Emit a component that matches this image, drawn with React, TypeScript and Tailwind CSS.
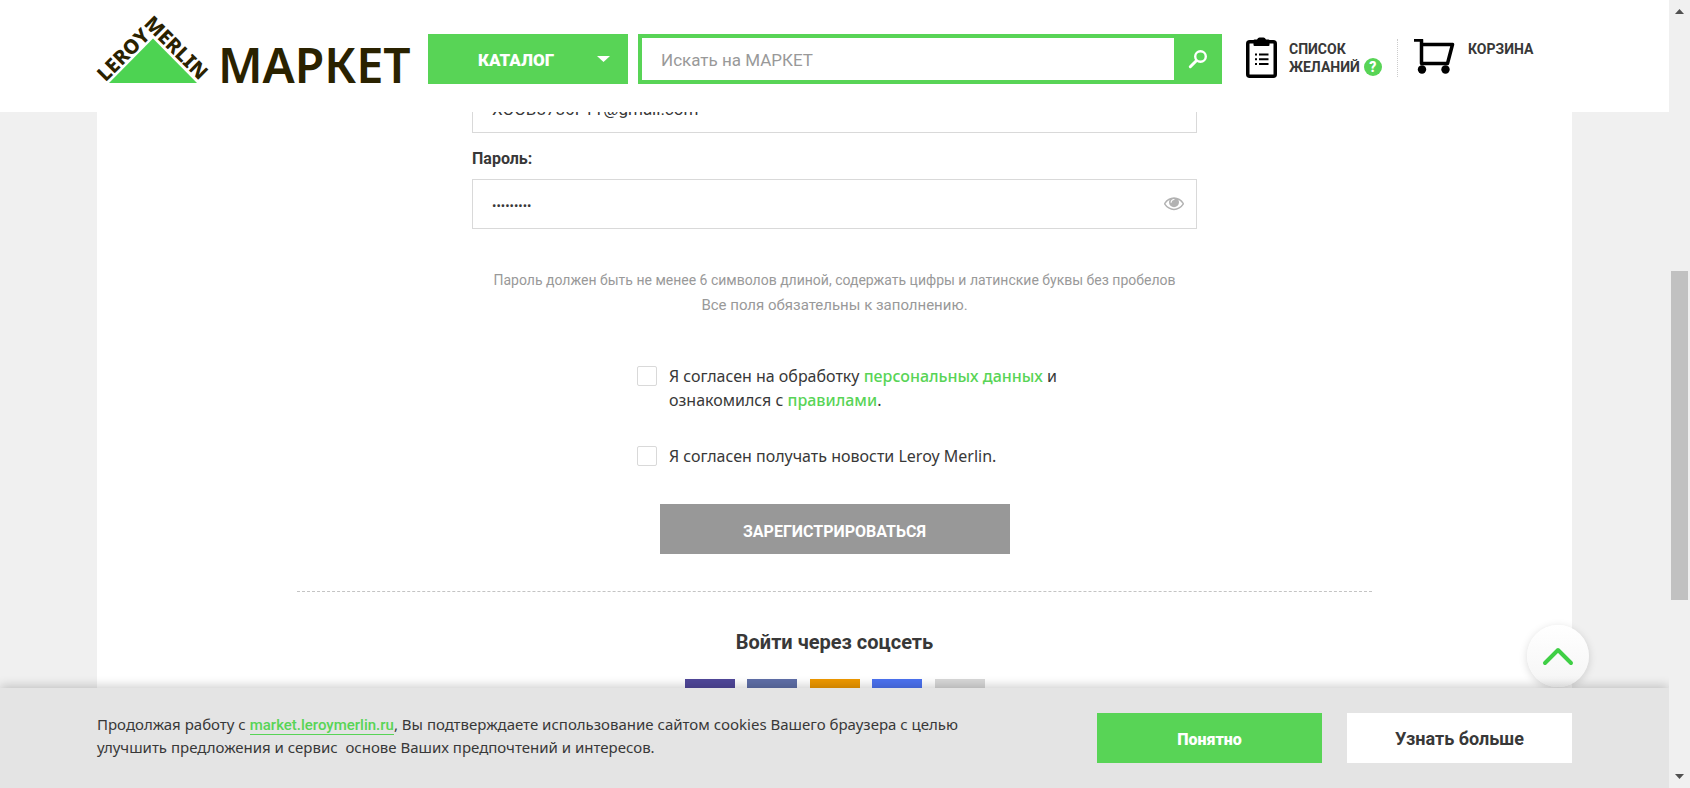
import React from "react";

const socials = [
  { name: "Viber", color: "bg-[#50479a]" },
  { name: "ВКонтакте", color: "bg-[#5f6fa8]" },
  { name: "Одноклассники", color: "bg-[#ee9800]" },
  { name: "Facebook", color: "bg-[#4b72f0]" },
  { name: "Почта", color: "bg-[#d8d8d8]" },
];

function Logo() {
  return (
    <svg width="313" height="76" viewBox="0 0 313 76" className="overflow-visible" role="img" aria-label="Leroy Merlin Маркет">
      <polygon points="12,71 56,26.500 100,71" fill="#4dd352" />
      <g fill="#2a2200" fontFamily="'Noto Sans', sans-serif">
        <g fontWeight="800">
          <text fontSize="20" transform="translate(8.500 70.500) rotate(-45)">LEROY</text>
          <text fontSize="20" transform="translate(46 12.500) rotate(45)">MERLIN</text>
        </g>
        <text x="121" y="71" fontSize="48" fontWeight="600">МАРКЕТ</text>
      </g>
    </svg>
  );
}

function SearchIcon() {
  return (
    <svg width="20" height="20" viewBox="0 0 20 20" fill="none" stroke="#fff">
      <circle cx="12.500" cy="7.500" r="5.300" strokeWidth="2.400" />
      <path d="M8.300 11.700 2.300 17.700" strokeWidth="3" strokeLinecap="round" />
    </svg>
  );
}

function ClipboardIcon() {
  return (
    <svg width="31" height="41" viewBox="0 0 31 41" className="shrink-0">
      <rect x="1.750" y="4.750" width="27.500" height="34.500" rx="2" fill="none" stroke="#000" strokeWidth="3.500" />
      <path d="M7.500 3.500q0-1 1-1h2.500q1-2 2.500-2h4q1.500 0 2.500 2h2.500q1 0 1 1v4.500q0 1-1 1h-14q-1 0-1-1z" />
      <path d="M9 17.500h2m2 0h9.500M9 22.300h2m2 0h9.500M9 27h2m2 0h9.500" stroke="#000" strokeWidth="2" />
    </svg>
  );
}

function CartIcon() {
  return (
    <svg width="41" height="36" viewBox="0 1 41 36" className="shrink-0">
      <path d="M0 2h7.500V25.500H33.500L38.500 6.500H7.500" fill="none" stroke="#000" strokeWidth="3.500" strokeLinejoin="round" />
      <circle cx="8" cy="31.500" r="4.200" />
      <circle cx="31.500" cy="31.500" r="4.200" />
    </svg>
  );
}

function EyeIcon() {
  return (
    <svg width="20" height="20" viewBox="0 0 1792 1792" fill="#b2b2b2">
      <path d="M1664 960q-152-236-381-353 61 104 61 225 0 185-131.500 316.500t-316.500 131.500-316.500-131.500-131.500-316.500q0-121 61-225-229 117-381 353 133 205 333.500 326.500t434.500 121.500 434.500-121.500 333.500-326.500zm-720-384q0-20-14-34t-34-14q-125 0-214.500 89.500t-89.500 214.500q0 20 14 34t34 14 34-14 14-34q0-86 61-147t147-61q20 0 34-14t14-34zm848 384q0 34-20 69-140 230-376.500 368.500t-499.500 138.500-499.500-139-376.500-368q-20-35-20-69t20-69q140-229 376.500-368t499.500-139 499.500 139 376.500 368q20 35 20 69z" />
    </svg>
  );
}

function Header() {
  return (
    <header className="h-28 shrink-0 bg-white px-[97px]">
      <div className="flex items-start">
        <a href="#home" className="mt-3 w-[331px] shrink-0">
          <Logo />
        </a>
        <button type="button" className="mt-[34px] flex h-[50px] w-[200px] shrink-0 items-center justify-between bg-[#58d456] pr-[18px] pl-[50px] text-[17px] font-black text-white">
          <span className="pt-1">КАТАЛОГ</span>
          <svg width="13" height="6" viewBox="0 0 13 6" fill="#fff">
            <path d="M0 0h13L6.500 6z" />
          </svg>
        </button>
        <form className="mt-[34px] ml-2.5 flex h-[50px] flex-1 border-4 border-r-0 border-[#58d456]">
          <input
            type="search"
            aria-label="Поиск"
            placeholder="Искать на МАРКЕТ"
            className="min-w-0 flex-1 bg-white px-[19px] pt-[3px] text-[17px] outline-none placeholder:text-[#999]"
          />
          <button type="submit" aria-label="Найти" className="flex w-12 items-center justify-center bg-[#58d456]">
            <SearchIcon />
          </button>
        </form>
        <div className="mt-[37px] flex w-[350px] shrink-0 items-start pl-6 text-sm leading-[17px] font-bold">
          <a href="#wishlist" className="flex gap-3">
            <ClipboardIcon />
            <span className="w-[108px] pt-1">
              СПИСОК
              <br />
              <span className="flex items-center gap-1">
                ЖЕЛАНИЙ
                <span className="flex size-[18px] items-center justify-center rounded-full bg-[#58d456] font-black text-white">?</span>
              </span>
            </span>
          </a>
          <a href="#cart" className="mt-0.5 flex h-[38px] gap-[13px] border-l border-dotted border-[#ccc] pl-4">
            <CartIcon />
            <span className="pt-0.5">КОРЗИНА</span>
          </a>
        </div>
      </div>
    </header>
  );
}

const field = "h-[50px] w-full border border-[#d9d9d9] bg-white px-[19px] outline-none";
const box = "mt-0.5 size-5 shrink-0 appearance-none rounded-[2px] border border-[#d9d9d9] bg-white checked:bg-[#58d456]";

function Register() {
  return (
    <main className="min-h-0 flex-1 overflow-hidden bg-[#f0f0f0] px-[97px]">
      <div className="flex h-full flex-col items-center bg-white">
        <form className="-mt-[29px] flex w-[725px] shrink-0 flex-col">
          <input type="email" aria-label="E-mail" defaultValue="XOOB8786F11@gmail.com" className={field + " pt-0.5 text-[17px]"} />
          <label htmlFor="password" className="mt-[14px] mb-2 text-base leading-6 font-bold">
            Пароль:
          </label>
          <div className="relative">
            <input id="password" type="password" defaultValue="leroy1234" className={field + " pt-0.5 text-[13px]"} />
            <button type="button" aria-label="Показать пароль" className="absolute top-[14px] right-[13px]">
              <EyeIcon />
            </button>
          </div>
          <div className="mt-[39px] text-center text-[#999]">
            <p className="text-sm leading-[25px]">
              Пароль должен быть не менее 6 символов длиной, содержать цифры и латинские буквы без пробелов
            </p>
            <p className="text-[15px] leading-[25px]">Все поля обязательны к заполнению.</p>
          </div>
          <div className="mt-[46px] ml-[165px] flex flex-col gap-8 font-['Noto_Sans',sans-serif] text-base leading-6">
            <div className="flex gap-3">
              <input type="checkbox" id="terms" className={box} />
              <label htmlFor="terms">
                Я согласен на обработку{" "}
                <a href="#personal" className="font-medium text-[#58d456]">персональных данных</a> и
                <br />
                ознакомился с <a href="#rules" className="font-medium text-[#58d456]">правилами</a>.
              </label>
            </div>
            <div className="flex gap-3">
              <input type="checkbox" id="news" className={box} />
              <label htmlFor="news">Я согласен получать новости Leroy Merlin.</label>
            </div>
          </div>
          <button type="submit" className="mt-9 h-[50px] w-[350px] self-center bg-[#989898] pt-1.5 text-base font-bold text-white">
            ЗАРЕГИСТРИРОВАТЬСЯ
          </button>
        </form>
        <section className="mt-[37px] flex w-[1075px] shrink-0 flex-col items-center border-t border-dashed border-[#c4c4c4] pt-9">
          <h2 className="text-xl leading-7 font-bold">Войти через соцсеть</h2>
          <div className="mt-[23px] flex w-[300px] justify-between">
            {socials.map((s) => (
              <a key={s.name} href="#social" aria-label={s.name} className={"size-[50px] " + s.color} />
            ))}
          </div>
        </section>
      </div>
    </main>
  );
}

function CookieBar() {
  return (
    <footer className="relative flex h-[100px] shrink-0 items-center gap-[25px] bg-[#e4e4e4] px-[97px] shadow-[0_-2px_10px_rgba(0,0,0,0.2)]">
      <p className="flex-1 pb-1.5 font-['Noto_Sans',sans-serif] text-[15px] leading-[22px]">
        Продолжая работу с{" "}
        <a href="#market" className="border-b border-[#58d456] font-[Roboto,sans-serif] font-medium text-[#58d456]">market.leroymerlin.ru</a>, Вы
        подтверждаете использование сайтом cookies Вашего браузера с целью
        <br />
        улучшить предложения и сервис&nbsp; основе Ваших предпочтений и интересов.
      </p>
      <button type="button" className="h-[50px] w-[225px] bg-[#58d456] pt-1 text-base font-black text-white">Понятно</button>
      <button type="button" className="h-[50px] w-[225px] bg-white pt-0.5 text-lg font-bold">Узнать больше</button>
    </footer>
  );
}

function ScrollRail() {
  return (
    <div aria-hidden="true" className="flex w-[21px] shrink-0 flex-col items-center bg-[#f0f0f0] py-[9px]">
      <svg width="9" height="5" viewBox="0 0 9 5" fill="#505050">
        <path d="M0 5h9L4.500 0z" />
      </svg>
      <div className="flex w-full flex-1 flex-col px-0.5 pb-[15px]">
        <div className="grow-[257]" />
        <div className="grow-[329] bg-[#c1c1c1]" />
        <div className="grow-[159]" />
      </div>
      <svg width="9" height="5" viewBox="0 0 9 5" fill="#505050">
        <path d="M0 0h9L4.500 5z" />
      </svg>
    </div>
  );
}

export default function App() {
  return (
    <div className="flex h-screen font-[Roboto,sans-serif] text-[#383838]">
      <div className="relative flex min-w-0 flex-1 flex-col overflow-hidden">
        <Header />
        <Register />
        <button
          type="button"
          aria-label="Наверх"
          className="absolute right-20 bottom-[101px] flex size-[62px] items-center justify-center rounded-full bg-linear-to-b from-white to-[#f5f5f5] shadow-[0_2px_8px_rgba(0,0,0,0.15)]"
        >
          <svg width="32" height="20" viewBox="0 0 32 20" fill="none" stroke="#3fcf45" strokeWidth="4" strokeLinecap="round" strokeLinejoin="round">
            <path d="M3 17 16 4l13 13" />
          </svg>
        </button>
        <CookieBar />
      </div>
      <ScrollRail />
    </div>
  );
}
